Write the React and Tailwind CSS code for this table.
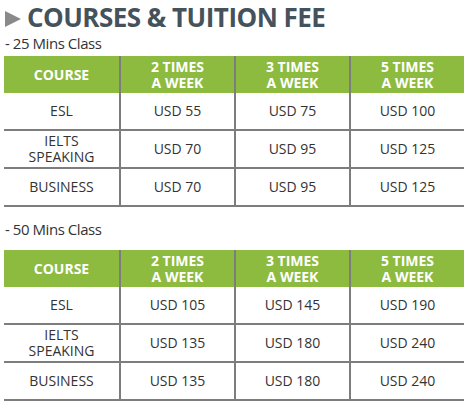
const rows25 = [
  { course: ["ESL"], prices: ["USD 55", "USD 75", "USD 100"] },
  { course: ["IELTS", "SPEAKING"], prices: ["USD 70", "USD 95", "USD 125"] },
  { course: ["BUSINESS"], prices: ["USD 70", "USD 95", "USD 125"] },
];

const rows50 = [
  { course: ["ESL"], prices: ["USD 105", "USD 145", "USD 190"] },
  { course: ["IELTS", "SPEAKING"], prices: ["USD 135", "USD 180", "USD 240"] },
  { course: ["BUSINESS"], prices: ["USD 135", "USD 180", "USD 240"] },
];

const headers = [["COURSE"], ["2 TIMES", "A WEEK"], ["3 TIMES", "A WEEK"], ["5 TIMES", "A WEEK"]];

const Lines = ({ lines }) => lines.map((l) => <div key={l}>{l}</div>);

const FeeTable = ({ rows }) => (
  <div className="ml-[4px] w-[460px]">
    <div className="grid grid-cols-4 h-[37px] bg-[#8cbb3f] text-white font-bold text-[14px] leading-[16px]">
      {headers.map((h, i) => (
        <div
          key={i}
          className={`flex flex-col items-center justify-center text-center ${i > 0 ? "border-l-2 border-[#7d7d7d]" : ""}`}
        >
          <Lines lines={h} />
        </div>
      ))}
    </div>
    {rows.map((r, ri) => (
      <div
        key={ri}
        className="grid grid-cols-4 h-[38px] border-b-2 border-[#7d7d7d] text-[14px] leading-[16px] text-[#333]"
      >
        <div className="flex flex-col items-center justify-center text-center">
          <Lines lines={r.course} />
        </div>
        {r.prices.map((p) => (
          <div key={p} className="flex items-center justify-center border-l-2 border-[#7d7d7d]">
            {p}
          </div>
        ))}
      </div>
    ))}
  </div>
);

export default function App() {
  return (
    <div className="w-[473px] h-[410px] bg-white pt-[2px]" style={{ fontFamily: '"Open Sans", sans-serif' }}>
      <div className="flex items-center h-[30px]">
        <svg width="27" height="30" viewBox="0 0 27 30" className="shrink-0">
          <polygon points="5,9 5,25 21,17" fill="#8a8a8a" />
        </svg>
        <h1 className="text-[26px] leading-[30px] font-bold tracking-[-0.02em] text-[#45525b]">COURSES &amp; TUITION FEE</h1>
      </div>
      <p className="mt-[2px] ml-[5px] text-[15px] leading-[18px] tracking-[-0.03em] text-[#333]">- 25 Mins Class</p>
      <div className="mt-[4px]">
        <FeeTable rows={rows25} />
      </div>
      <p className="mt-[13px] ml-[5px] text-[15px] leading-[18px] tracking-[-0.03em] text-[#333]">- 50 Mins Class</p>
      <div className="mt-[12px]">
        <FeeTable rows={rows50} />
      </div>
    </div>
  );
}
